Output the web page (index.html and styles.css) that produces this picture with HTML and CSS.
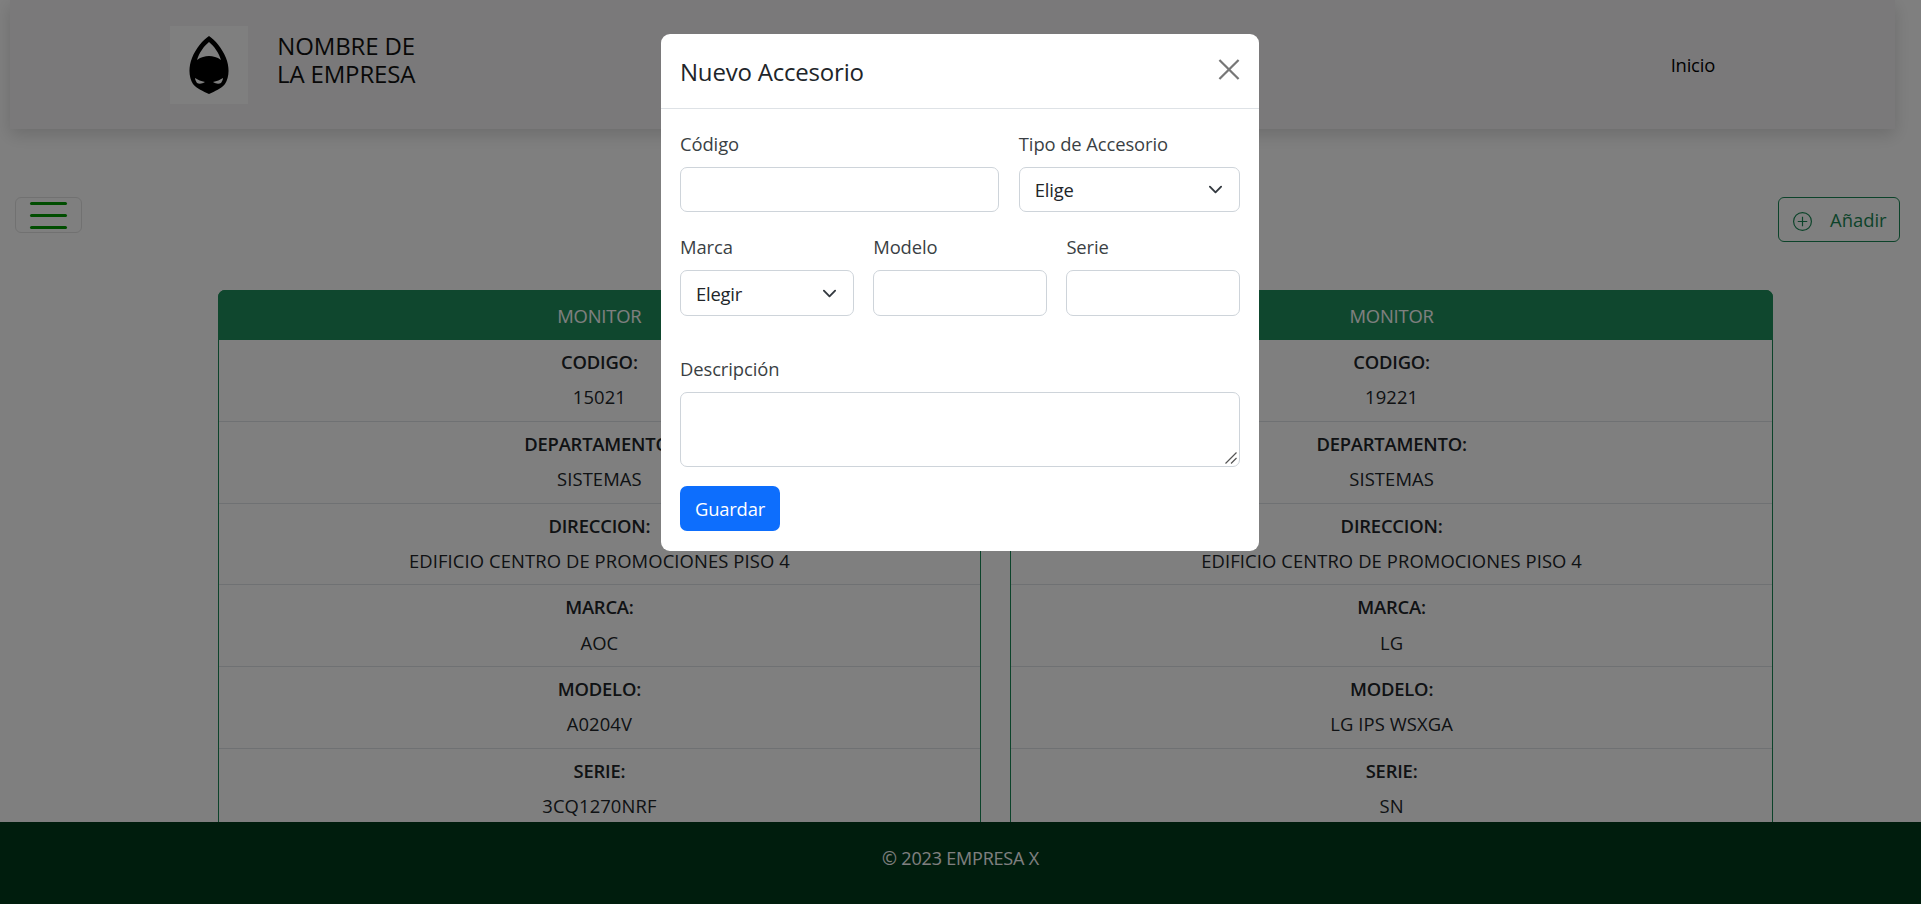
FILE: index.html
```html
<!DOCTYPE html>
<html lang="es">
<head>
<meta charset="utf-8">
<title>Accesorios</title>
<link rel="stylesheet" href="styles.css">
</head>
<body>
<header class="topbar">
  <div class="brand">
    <div class="logo">
      <svg class="logo-mark" viewBox="0 0 40 58" aria-hidden="true">
        <path fill="#000" d="M20 0C26 4 33 12 37 22C41 32 40 42 36 48C32 53 26 55 20 58C14 55 8 53 4 48C0 42-1 32 3 22C7 12 14 4 20 0Z"/>
        <path fill="#fff" d="M20 6C25 10 30 17 32 24C28 21 24 20 20 20C16 20 12 21 8 24C10 17 15 10 20 6Z"/>
        <path fill="#fff" d="M6 42C9 44 12 45 16 46C13 48 10 48 8 47C7 45 6 44 6 42ZM34 42C31 44 28 45 24 46C27 48 30 48 32 47C33 45 34 44 34 42Z"/>
      </svg>
    </div>
    <div class="brand-name">NOMBRE DE<br>LA EMPRESA</div>
  </div>
  <nav class="nav"><a class="nav-link">Inicio</a></nav>
</header>

<div class="content">
  <aside class="sidebar">
    <button class="menu-btn" type="button" aria-label="Menú">
      <span class="menu-line"></span><span class="menu-line"></span><span class="menu-line"></span>
    </button>
  </aside>
  <main class="main">
    <div class="toolbar">
      <button class="add-btn" type="button">
        <svg class="add-icon" viewBox="0 0 16 16" aria-hidden="true">
          <circle cx="8" cy="8" r="7.5" fill="none" stroke="currentColor" stroke-width="1"/>
          <path d="M8 4v8M4 8h8" fill="none" stroke="currentColor" stroke-width="1"/>
        </svg>
        <span>Añadir</span>
      </button>
    </div>
    <div class="cards">
      <section class="card">
        <h2 class="card-head">MONITOR</h2>
        <div class="row"><strong class="key">CODIGO:</strong><span class="val">15021</span></div>
        <div class="row"><strong class="key">DEPARTAMENTO:</strong><span class="val">SISTEMAS</span></div>
        <div class="row"><strong class="key">DIRECCION:</strong><span class="val">EDIFICIO CENTRO DE PROMOCIONES PISO 4</span></div>
        <div class="row"><strong class="key">MARCA:</strong><span class="val">AOC</span></div>
        <div class="row"><strong class="key">MODELO:</strong><span class="val">A0204V</span></div>
        <div class="row"><strong class="key">SERIE:</strong><span class="val">3CQ1270NRF</span></div>
      </section>
      <section class="card">
        <h2 class="card-head">MONITOR</h2>
        <div class="row"><strong class="key">CODIGO:</strong><span class="val">19221</span></div>
        <div class="row"><strong class="key">DEPARTAMENTO:</strong><span class="val">SISTEMAS</span></div>
        <div class="row"><strong class="key">DIRECCION:</strong><span class="val">EDIFICIO CENTRO DE PROMOCIONES PISO 4</span></div>
        <div class="row"><strong class="key">MARCA:</strong><span class="val">LG</span></div>
        <div class="row"><strong class="key">MODELO:</strong><span class="val">LG IPS WSXGA</span></div>
        <div class="row"><strong class="key">SERIE:</strong><span class="val">SN</span></div>
      </section>
    </div>
  </main>
</div>

<footer class="footer">© 2023 EMPRESA X</footer>

<div class="backdrop"></div>

<div class="modal-wrap">
  <div class="modal">
    <div class="modal-head">
      <h1 class="modal-title">Nuevo Accesorio</h1>
      <button class="close" type="button" aria-label="Cerrar">
        <svg viewBox="0 0 16 16" class="close-icon" aria-hidden="true"><path d="M.7.7l14.6 14.6M15.3.7L.7 15.3" fill="none" stroke="currentColor" stroke-width="1.7"/></svg>
      </button>
    </div>
    <form class="modal-body">
      <div class="form-row row-a">
        <div class="field"><label class="label">Código</label><input class="control" type="text"></div>
        <div class="field"><label class="label">Tipo de Accesorio</label><select class="control select"><option>Elige</option></select></div>
      </div>
      <div class="form-row row-b">
        <div class="field"><label class="label">Marca</label><select class="control select"><option>Elegir</option></select></div>
        <div class="field"><label class="label">Modelo</label><input class="control" type="text"></div>
        <div class="field"><label class="label">Serie</label><input class="control" type="text"></div>
      </div>
      <div class="field desc">
        <label class="label">Descripción</label>
        <div class="area-wrap">
          <textarea class="control area"></textarea>
          <svg class="grip" viewBox="0 0 12 12" aria-hidden="true"><path d="M0.5 11.5L11.5 0.5M6 11.5L11.5 6" fill="none" stroke="#555" stroke-width="1.2"/></svg>
        </div>
      </div>
      <button class="save" type="button">Guardar</button>
    </form>
  </div>
</div>
</body>
</html>
```

FILE: styles.css
```css
* { box-sizing: border-box; }
html, body { height: 100%; }
body {
  margin: 0;
  overflow: hidden;
  background: #fff;
  color: #212529;
  font-family: "Open Sans", "Noto Sans", sans-serif;
  font-size: 18.4px;
  letter-spacing: -0.2px;
}

.topbar {
  position: relative;
  height: 129px;
  margin: 0 26px 0 10px;
  padding: 26px 180px 0 160px;
  display: flex;
  align-items: flex-start;
  justify-content: space-between;
  background: #f4f3f4;
  box-shadow: 0 6px 16px rgba(0, 0, 0, .15);
}
.brand { display: flex; gap: 29px; }
.logo {
  width: 78px;
  height: 78px;
  display: flex;
  align-items: center;
  justify-content: center;
  background: #fff;
}
.logo-mark { width: 40px; height: 58px; }
.brand-name {
  padding-top: 6px;
  font-size: 24px;
  line-height: 27.5px;
  text-align: center;
  letter-spacing: -0.15px;
  font-weight: 500;
  color: #111;
}
.nav { padding-top: 24px; }
.nav-link { color: #000; line-height: 30px; display: block; }

.content { display: flex; }
.sidebar { width: 95px; flex: none; margin-top: 58px; padding: 10px 0 0 15px; background: #fefefe; }
.menu-btn {
  width: 67px;
  height: 36px;
  padding: 0 14px;
  display: flex;
  flex-direction: column;
  justify-content: center;
  gap: 9px;
  background: transparent;
  border: 1px solid #e3e3e3;
  border-radius: 6px;
}
.menu-line { display: block; height: 3px; background: #009a00; border-radius: 2px; flex: none; }

.main { flex: 1; min-width: 0; padding: 68px 21px 0 0; }
.toolbar { display: flex; justify-content: flex-end; }
.add-btn {
  width: 122px;
  height: 45px;
  padding: 0 0 0 14px;
  display: flex;
  align-items: center;
  gap: 18px;
  color: #198754;
  background: transparent;
  border: 1px solid #198754;
  border-radius: 6px;
  font: inherit;
}
.add-icon { width: 19px; height: 19px; flex: none; margin-top: 3px; }

.cards {
  margin: 48px 127px 0 123px;
  display: grid;
  grid-template-columns: 1fr 1fr;
  gap: 29.4px;
}
.card { border: 1px solid #198754; border-radius: 7px 7px 0 0; }
.card-head {
  margin: -1px -1px 0;
  height: 50px;
  display: flex;
  align-items: center;
  justify-content: center;
  background: #1e8f5c;
  color: #fff;
  font-size: 18.4px;
  font-weight: 400;
  border-radius: 7px 7px 0 0;
}
.row {
  height: 81.78px;
  padding-top: 7px;
  display: flex;
  flex-direction: column;
  align-items: center;
  gap: 6px;
  line-height: 29.4px;
  border-bottom: 1px solid #dee2e6;
}
.key { font-weight: 600; }
.val { letter-spacing: 0.1px; }

.footer {
  position: fixed;
  left: 0;
  right: 0;
  bottom: 0;
  height: 82px;
  padding-top: 21px;
  background: #003a1a;
  color: #fff;
  font-size: 18px;
  text-align: center;
  line-height: 30px;
}

.backdrop { position: fixed; inset: 0; background: rgba(0, 0, 0, .5); }

.modal-wrap { position: fixed; inset: 0; display: flex; justify-content: center; align-items: flex-start; padding: 34px 1px 0 0; }
.modal { width: 598px; background: #fff; border-radius: 9px; }
.modal-head {
  height: 75px;
  padding: 0 19px;
  display: flex;
  align-items: center;
  justify-content: space-between;
  border-bottom: 1px solid #dee2e6;
}
.modal-title { margin: 2px 0 0; font-size: 24px; line-height: 30px; font-weight: 500; letter-spacing: -0.2px; color: #212529; }
.close { padding: 0; width: 22px; height: 21px; margin-bottom: 3px; background: none; border: 0; color: #777; }
.close-icon { display: block; width: 22px; height: 21px; }
.modal-body { padding: 21px 19px 20px; }
.form-row { display: grid; gap: 19.6px; }
.row-a { grid-template-columns: 319fr 221fr; }
.row-b { grid-template-columns: 1fr 1fr 1fr; margin-top: 21px; }
.row-b .control { height: 46px; }
.label { display: block; height: 28px; line-height: 28px; margin-bottom: 9px; color: #3a3f44; letter-spacing: -0.1px; }
.control {
  display: block;
  width: 100%;
  height: 45px;
  padding: 0 15px;
  background-color: #fff;
  border: 1px solid #ced4da;
  border-radius: 7px;
  color: #212529;
  font: inherit;
  letter-spacing: inherit;
}
.select {
  appearance: none;
  background-image: url("data:image/svg+xml,%3csvg xmlns='http://www.w3.org/2000/svg' viewBox='0 0 16 16'%3e%3cpath fill='none' stroke='%23343a40' stroke-linecap='round' stroke-linejoin='round' stroke-width='2' d='M2 5l6 6 6-6'/%3e%3c/svg%3e");
  background-repeat: no-repeat;
  background-position: right 16px center;
  background-size: 15px 15px;
}
.desc { margin-top: 39px; }
.area-wrap { position: relative; }
.area { height: 75px; resize: none; }
.grip { position: absolute; right: 3px; bottom: 3px; width: 12px; height: 12px; pointer-events: none; }
.save {
  display: block;
  margin-top: 19px;
  width: 100px;
  height: 45px;
  padding: 0;
  background: #0d6efd;
  color: #fff;
  border: 0;
  border-radius: 7px;
  font: inherit;
  letter-spacing: inherit;
}
```
